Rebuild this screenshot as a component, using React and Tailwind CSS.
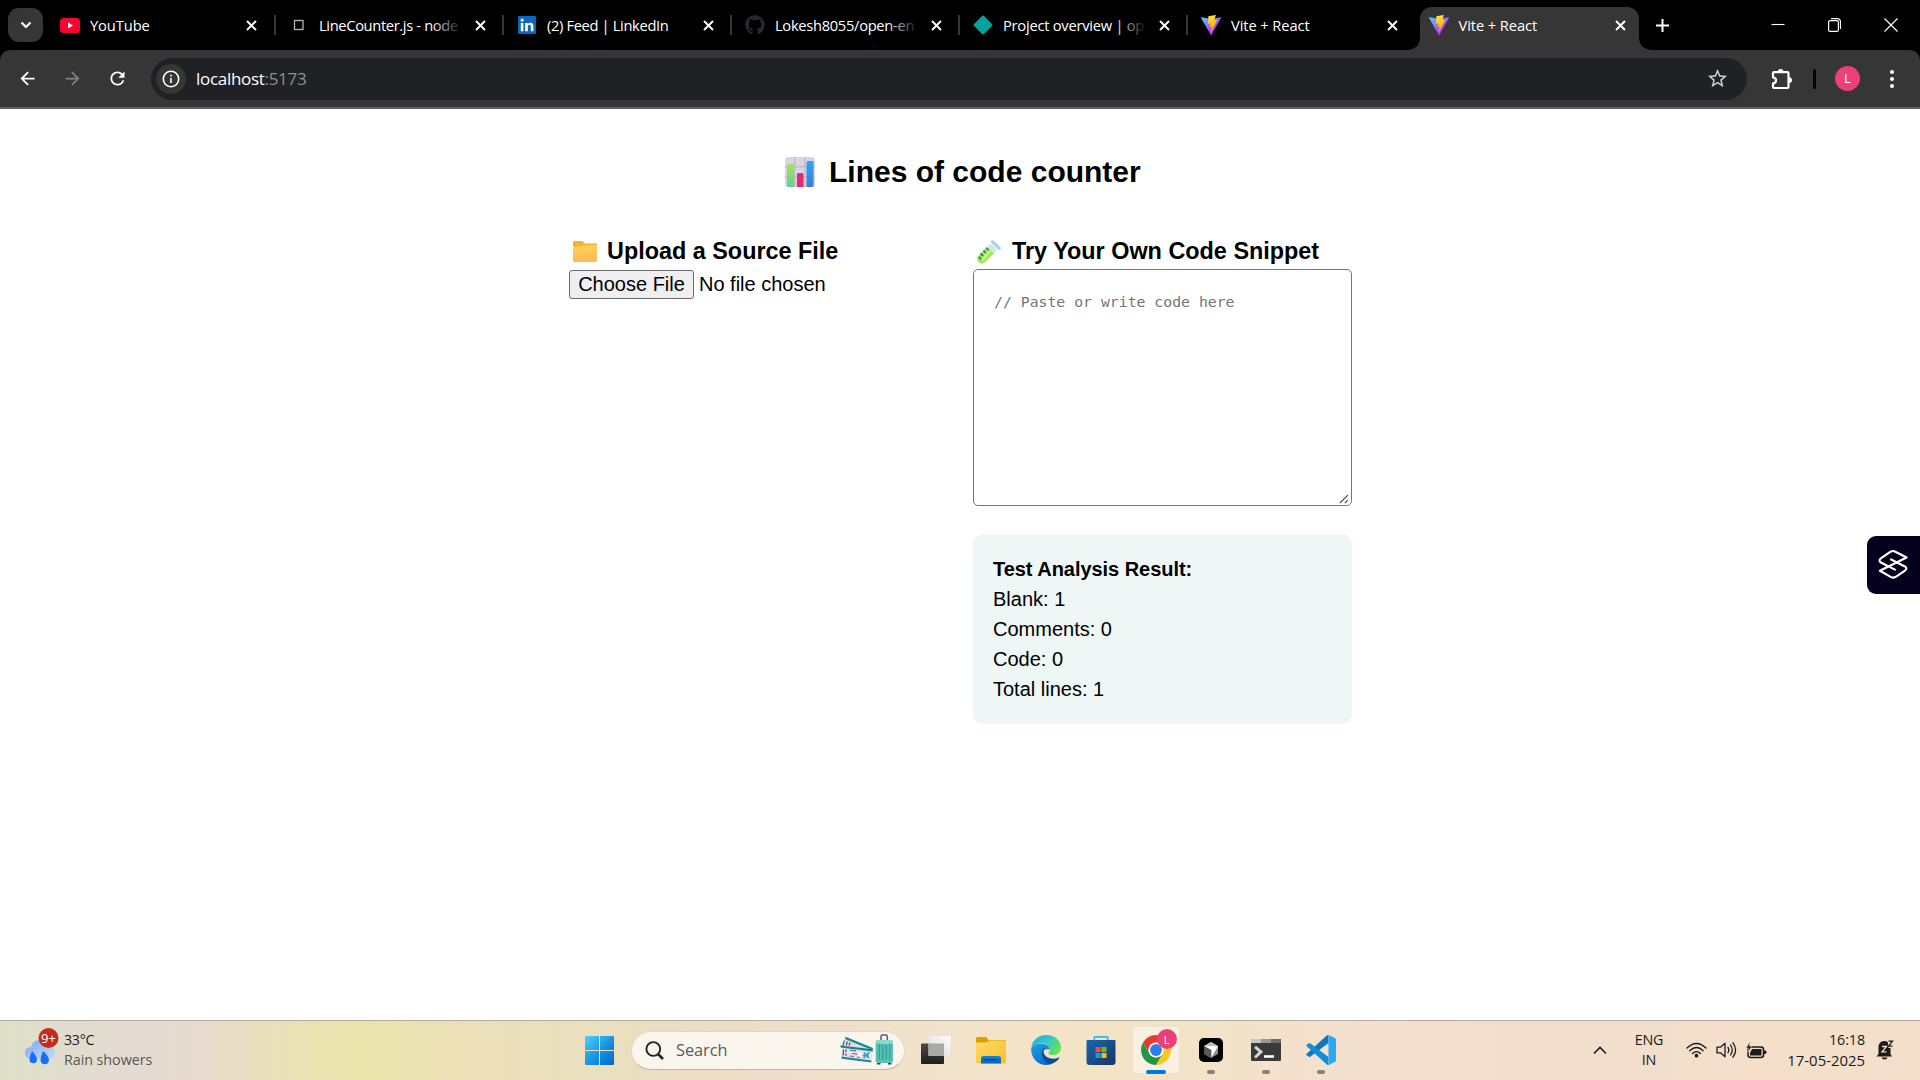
import React from "react";
import { MdArrowBack, MdArrowForward, MdRefresh, MdStarBorder } from "react-icons/md";
import { FaGithub } from "react-icons/fa";

const uiFont = "font-['Segoe_UI','Open_Sans',sans-serif]";

function YouTubeIcon() {
  return (
    <svg width="20" height="15" viewBox="0 0 20 15">
      <rect width="20" height="15" rx="3.5" fill="#ff0033" />
      <path d="M8 4.6v5.8l5-2.9z" fill="#fff" />
    </svg>
  );
}

function SquareIcon() {
  return (
    <svg width="12" height="12" viewBox="0 0 12 12">
      <rect x="1.5" y="1.5" width="8.5" height="9" fill="none" stroke="#b4b4b4" strokeWidth="1.3" />
    </svg>
  );
}

function LinkedInIcon() {
  return (
    <svg width="18" height="18" viewBox="0 0 18 18">
      <rect width="18" height="18" rx="1.3" fill="#0a66c2" />
      <circle cx="4.1" cy="4.1" r="1.6" fill="#fff" />
      <path d="M2.8 7h2.6v8.2H2.8zM7.2 7h2.5v1.1c.5-.8 1.4-1.4 2.6-1.4 2.5 0 3.1 1.6 3.1 3.8v4.7h-2.6v-4.2c0-1.1-.1-2.2-1.4-2.2s-1.6 1-1.6 2.1v4.3H7.2z" fill="#fff" />
    </svg>
  );
}

function DiamondIcon() {
  return (
    <svg width="20" height="20" viewBox="0 0 20 20">
      <path d="M9.2.8a1.200 1.200 0 0 1 1.600 0l8.300 8.400a1.200 1.200 0 0 1 0 1.600l-8.300 8.400a1.200 1.200 0 0 1-1.600 0L.9 10.800a1.200 1.200 0 0 1 0-1.600z" fill="#05a3a0" />
    </svg>
  );
}

function ViteIcon() {
  return (
    <svg width="20" height="20" viewBox="0 0 256 257">
      <defs>
        <linearGradient id="viteBody" x1="0%" x2="58%" y1="8%" y2="79%">
          <stop offset="0%" stopColor="#41D1FF" />
          <stop offset="100%" stopColor="#BD34FE" />
        </linearGradient>
        <linearGradient id="viteBolt" x1="43%" x2="50%" y1="2%" y2="89%">
          <stop offset="0%" stopColor="#FFEA83" />
          <stop offset="8%" stopColor="#FFDD35" />
          <stop offset="100%" stopColor="#FFA800" />
        </linearGradient>
      </defs>
      <path fill="url(#viteBody)" d="M255.153 37.938L134.897 252.976c-2.483 4.440-8.862 4.466-11.382.048L.875 37.958c-2.746-4.814 1.371-10.646 6.827-9.670l120.385 21.517a6.537 6.537 0 0 0 2.322-.004l117.867-21.483c5.438-.991 9.574 4.796 6.877 9.620Z" />
      <path fill="url(#viteBolt)" d="M185.432.063L96.440 17.501a3.268 3.268 0 0 0-2.634 3.014l-5.474 92.456a3.268 3.268 0 0 0 3.997 3.378l24.777-5.718c2.318-.535 4.413 1.507 3.936 3.838l-7.361 36.047c-.495 2.426 1.782 4.500 4.151 3.780l15.304-4.649c2.372-.720 4.652 1.360 4.150 3.788l-11.698 56.621c-.732 3.542 3.979 5.473 5.943 2.437l1.313-2.028l72.516-144.720c1.215-2.423-.880-5.186-3.540-4.672l-25.505 4.922c-2.396.462-4.435-1.770-3.759-4.114l16.646-57.705c.677-2.350-1.370-4.583-3.769-4.113Z" />
    </svg>
  );
}

const tabs = [
  { title: "YouTube", icon: <YouTubeIcon />, sep: true, width: "w-[229px]" },
  { title: "LineCounter.js - node", icon: <SquareIcon />, sep: true, fade: true, tracking: "tracking-[-0.35px]" },
  { title: "(2) Feed | LinkedIn", icon: <LinkedInIcon />, sep: true, tracking: "tracking-[-0.35px]" },
  { title: "Lokesh8055/open-en", icon: <FaGithub size={20} color="#24292f" />, sep: true, fade: true, tracking: "tracking-[-0.3px]" },
  { title: "Project overview | op", icon: <DiamondIcon />, sep: true, fade: true, tracking: "tracking-[-0.25px]" },
  { title: "Vite + React", icon: <ViteIcon />, width: "w-[227.5px]" },
  { title: "Vite + React", icon: <ViteIcon />, active: true, width: "w-[227.5px]" },
];

function Tab({ tab }) {
  return (
    <div className={"relative flex h-[50px] shrink-0 items-center " + (tab.width || "w-[228px]")}>
      {tab.active && (
        <svg className="absolute -left-[10px] top-[7px]" width="250" height="43" viewBox="0 0 250 43">
          <path d="M0 43c8 0 13-5 13-13V12C13 5 18 0 25 0h195c7 0 12 5 12 12v18c0 8 5 13 14 13z" fill="#363636" />
        </svg>
      )}
      <div className="relative ml-3 flex w-5 items-center justify-center">{tab.icon}</div>
      <div className={"relative ml-[10px] w-[144px] whitespace-nowrap text-[14.7px] leading-5 text-white " + (tab.tracking || "tracking-[-0.1px]")}>
        {tab.title}
        {tab.fade && <span className="absolute right-0 top-0 h-5 w-8 bg-linear-to-r from-transparent to-black" />}
      </div>
      <svg className="relative ml-[12px]" width="11" height="11" viewBox="0 0 11 11">
        <path d="M1 1l9 9M10 1l-9 9" stroke="#fff" strokeWidth="1.9" />
      </svg>
      {tab.sep && <div className="ml-auto mr-px h-5 w-[2px] bg-[#363636]" />}
    </div>
  );
}

function TabStrip() {
  return (
    <div className="flex h-[50px] bg-black">
      <div className="flex w-[48px] items-center pl-2">
        <div className="flex h-[34px] w-[35px] items-center justify-center rounded-[11px] bg-[#363636]">
          <svg width="12" height="8" viewBox="0 0 12 8">
            <path d="M1.5 1.5L6 6l4.500-4.500" fill="none" stroke="#fff" strokeWidth="2.2" />
          </svg>
        </div>
      </div>
      {tabs.map((t, i) => (
        <Tab key={i} tab={t} />
      ))}
      <div className="ml-[12px] flex items-center">
        <svg width="13" height="13" viewBox="0 0 13 13">
          <path d="M6.5 0v13M0 6.500h13" stroke="#fff" strokeWidth="2" />
        </svg>
      </div>
      <div className="ml-auto flex items-center gap-[43px] pr-[22px]">
        <svg width="14" height="14" viewBox="0 0 14 14">
          <path d="M.5 6.500h13" stroke="#fff" strokeWidth="1.1" />
        </svg>
        <svg width="13" height="14" viewBox="0 0 13 14" fill="none" stroke="#fff" strokeWidth="1.2">
          <rect x=".6" y="2.6" width="9.8" height="10.8" rx="1.5" />
          <path d="M3 .7h6.500a3 3 0 0 1 3 3V11" />
        </svg>
        <svg width="14" height="14" viewBox="0 0 14 14">
          <path d="M.5.5l13 13M13.500.5l-13 13" stroke="#fff" strokeWidth="1.2" />
        </svg>
      </div>
    </div>
  );
}

function Toolbar() {
  return (
    <div className="bg-black">
      <div className="flex h-[59px] items-center rounded-t-[10px] border-b-2 border-[#5e5c5c] bg-[#363636] text-white">
        <MdArrowBack className="ml-[17px]" size={21} />
        <MdArrowForward className="ml-[24px]" size={21} color="#818181" />
        <MdRefresh className="ml-[24px]" size={21} />
        <div className="ml-[23px] flex h-[42px] w-[1596px] items-center rounded-full bg-[#202124]">
          <div className="ml-[5px] flex h-[30px] w-[30px] items-center justify-center rounded-full bg-[#363636]">
            <svg width="18" height="18" viewBox="0 0 18 18">
              <circle cx="9" cy="9" r="7.7" fill="none" stroke="#fff" strokeWidth="1.6" />
              <path d="M9 8v5M9 4.800v1.700" stroke="#fff" strokeWidth="1.6" />
            </svg>
          </div>
          <div className="ml-[10px] mt-px text-[17px] leading-6 tracking-[-0.3px]">
            localhost<span className="text-[#8e8f91]">:5173</span>
          </div>
          <MdStarBorder className="ml-auto mr-[18px]" size={23} color="#cfcfcf" />
        </div>
        <svg className="ml-[24px]" width="22" height="22" viewBox="0 0 22 22">
          <path d="M3 4.200h13.500q1 0 1 1V19q0 1-1 1H3q-1 0-1-1v-3.600q3-.4 3-3t-3-3V5.200q0-1 1-1z" fill="none" stroke="#fff" strokeWidth="2.2" strokeLinejoin="round" />
          <path d="M7 4a2.600 2.600 0 0 1 5.200 0zM18 9.500a2.600 2.600 0 0 1 0 5.200z" fill="#fff" stroke="#fff" />
        </svg>
        <div className="ml-[20px] h-5 w-[3px] rounded bg-black" />
        <div className="ml-[19px] flex h-[25px] w-[25px] items-center justify-center rounded-full bg-[#ec407a] text-[13px]">L</div>
        <div className="ml-[30px] flex flex-col gap-[3px]">
          <span className="h-1 w-1 rounded-full bg-white" />
          <span className="h-1 w-1 rounded-full bg-white" />
          <span className="h-1 w-1 rounded-full bg-white" />
        </div>
      </div>
    </div>
  );
}

function ChartEmoji() {
  return (
    <svg width="30" height="30" viewBox="0 0 30 30">
      <defs>
        <linearGradient id="barG" x1="0" x2="0" y1="0" y2="1"><stop stopColor="#a6e05a" /><stop offset="1" stopColor="#5cd68c" /></linearGradient>
        <linearGradient id="barB" x1="0" x2="0" y1="0" y2="1"><stop stopColor="#30a4f4" /><stop offset="1" stopColor="#3f7cd0" /></linearGradient>
        <clipPath id="chartClip"><rect width="30" height="30" rx="3.5" /></clipPath>
      </defs>
      <g clipPath="url(#chartClip)">
        <rect width="30" height="30" fill="#dad5e0" />
        <path d="M0 9.800h30M0 19.800h30M9.800 0v30M19.800 0v30" stroke="#b9b2c2" strokeWidth="1" />
        <path d="M2 30V8.500q0-1.500 1.500-1.500h4Q9 7 9 8.500V30z" fill="url(#barG)" />
        <path d="M12 30V17.500q0-1.500 1.500-1.500h3.500q1.500 0 1.500 1.500V30z" fill="#e22a72" />
        <path d="M21.500 30V5.500Q21.500 4 23 4h4q1.500 0 1.500 1.500V30z" fill="url(#barB)" />
      </g>
    </svg>
  );
}

function FolderEmoji() {
  return (
    <svg width="24" height="21" viewBox="0 0 24 21">
      <defs>
        <linearGradient id="folderF" x1="0" x2="0" y1="0" y2="1"><stop stopColor="#ffd352" /><stop offset="1" stopColor="#ffb75c" /></linearGradient>
      </defs>
      <path d="M0 1.500Q0 0 1.500 0h7q1 0 1.700.8L12 2.600h10.500Q24 2.600 24 4v3H0z" fill="#f9ae38" />
      <path d="M0 5.500h8.500L11 4.300h11.500q1.500 0 1.500 1.400v13.800q0 1.500-1.500 1.500h-21Q0 21 0 19.500z" fill="url(#folderF)" />
    </svg>
  );
}

function TubeEmoji() {
  return (
    <svg width="24" height="24" viewBox="0 0 24 24">
      <path d="M14 3.500l6.500 6.500-5 5-7.500-7z" fill="#cfe8f8" />
      <path d="M9 7.500l8 6L7 23q-3 1.500-5.500-1T.8 16.500z" fill="#a6e45a" />
      <path d="M15.500 7L5 20" stroke="#c8f388" strokeWidth="3" />
      <path d="M14.200.6q1.500-1 2.800.2l6.300 6.400q1 1.200 0 2.400-1 .8-2.400-.4l-6.600-6.400q-1-1.100-.1-2.200z" fill="#a3d2f5" />
      <path d="M4.200 14l1.500 1.500M7 11.200l1.500 1.500M9.800 8.400l1.500 1.500M2.500 17.500l1.200 1.200" stroke="#2c8c4c" strokeWidth="1.8" strokeLinecap="round" />
    </svg>
  );
}

function Page() {
  return (
    <main className="relative flex h-[911px] flex-col bg-white font-['Liberation_Sans',Arial,sans-serif] text-black">
      <h1 className="mt-[45px] flex h-[36px] items-center pl-[785px] text-[30px] font-bold leading-9">
        <ChartEmoji />
        <span className="ml-[14px] whitespace-nowrap">Lines of code counter</span>
      </h1>
      <div className="ml-[569px] mt-[48px] flex">
        <section className="w-[404px]">
          <h3 className="flex h-[27px] items-center pl-1 text-[23.4px] font-bold leading-[27px]">
            <FolderEmoji />
            <span className="ml-[10px]">Upload a Source File</span>
          </h3>
          <div className="mt-[4px] flex h-[30px] items-center text-[20px] leading-6">
            <div className="flex h-[29px] w-[125px] items-center justify-center rounded-[3px] border border-[#6b6b6b] bg-[#efefef] whitespace-nowrap">Choose File</div>
            <span className="ml-[5px]">No file chosen</span>
          </div>
        </section>
        <section className="w-[379px]">
          <h3 className="flex h-[27px] items-center pl-[4px] text-[23.4px] font-bold leading-[27px]">
            <TubeEmoji />
            <span className="ml-[11px] whitespace-nowrap">Try Your Own Code Snippet</span>
          </h3>
          <div className="mt-[4px] flex h-[237px] rounded-[5px] border border-[#767676] bg-white">
            <div className="whitespace-pre pl-[20px] pt-[22px] font-['DejaVu_Sans_Mono',monospace] text-[14.8px] leading-5 text-[#757575]">// Paste or write code here</div>
            <svg className="mb-[1px] ml-auto mr-[2px] self-end" width="10" height="10" viewBox="0 0 10 10">
              <path d="M.8 9.200l8-8M5.800 9.200l3-3" stroke="#444" strokeWidth="1.2" />
            </svg>
          </div>
          <div className="mt-[28px] rounded-[10px] bg-[#eef6f6] p-5 text-[20px] leading-[30px]">
            <div className="font-bold tracking-[-0.04px]">Test Analysis Result:</div>
            <div>Blank: 1</div>
            <div>Comments: 0</div>
            <div>Code: 0</div>
            <div>Total lines: 1</div>
          </div>
        </section>
      </div>
      <div className="absolute right-0 top-[427px] flex h-[58px] w-[53px] items-center rounded-l-[9px] bg-[#05001e] pb-px pl-[11px]">
        <svg width="30" height="31" viewBox="0 0 31 31" fill="none" stroke="#fff" strokeWidth="2.2" strokeLinejoin="round" strokeLinecap="round">
          <path d="M17.500 20.800L3 13.500q-3-2 .3-4.500L13 2.300q2.500-1.500 5 0L29.500 8.200 2 22l11.500 6.500q2 1.200 4.500 0l9.500-6.300q3.500-2.700.3-4.700L13.500 10.300" />
        </svg>
      </div>
    </main>
  );
}

function WeatherIcon() {
  return (
    <svg width="38" height="40" viewBox="0 0 38 40">
      <defs>
        <linearGradient id="cloud" x1="0" x2="1" y1="0" y2="1"><stop stopColor="#7ba5f2" /><stop offset="1" stopColor="#c8dcfa" /></linearGradient>
      </defs>
      <path d="M7 31q-6 0-6-6t6-6q2-7 9-7t8 7q7-1 7 6t-6 6z" fill="url(#cloud)" />
      <path d="M8 23q5 5 5 9a3.800 3.800 0 0 1-7.500 0q0-4 2.500-9zM19 23q6 5 6 9.500a4.300 4.300 0 0 1-8.500 0q0-4.500 2.500-9.500z" fill="#1273f5" />
      <circle cx="24.5" cy="10" r="10" fill="#c42b1c" />
      <text x="24.5" y="14.8" fontSize="13" fill="#fff" textAnchor="middle" fontFamily="Open Sans, sans-serif">9+</text>
    </svg>
  );
}

function StartIcon() {
  return (
    <svg width="29" height="29" viewBox="0 0 29 29">
      <defs>
        <linearGradient id="win" x1="0" x2="1" y1="0" y2="1"><stop stopColor="#4fd3fb" /><stop offset=".5" stopColor="#1c96e2" /><stop offset="1" stopColor="#0069c8" /></linearGradient>
      </defs>
      <path d="M1 0h13v14H0V1q0-1 1-1zM15 0h13q1 0 1 1v13H15zM0 15h14v14H1q-1 0-1-1zM15 15h14v13q0 1-1 1H15z" fill="url(#win)" />
    </svg>
  );
}

function TravelArt() {
  return (
    <svg width="54" height="32" viewBox="0 0 54 32">
      <path d="M6 3.300L32.500 14l-1.500 5L1.500 14z" fill="#e2dbe2" />
      <path d="M5.500 2.800L33 14l-.8 2L5 5z" fill="#128b90" />
      <path d="M4.500 6.500l-2 6M7.500 7.500l-1.300 4M10 8.500l-1 3" stroke="#42506e" strokeWidth="1.1" />
      <path d="M1.800 13L32.800 16l-1.300 11.500L1.500 23z" fill="#e9e2ea" />
      <path d="M0 11.800q1-.6 2.500 0l30.500 3.500-.3 2.200L2 13.800q-2-.6-2-2z" fill="#14868f" />
      <path d="M1.500 22.500l30 4-.3 2.100L1.500 24.800z" fill="#1c88a6" />
      <path d="M3.500 15.500l-.3 6M6 15.500v2.500M6 19.500v2.300" stroke="#48476a" strokeWidth="1.2" />
      <path d="M10 16.200l6 .6M10 22l4 .5M12 19.500l7 .8M17 23l3 .3" stroke="#6e6c88" strokeWidth="1.2" />
      <path d="M17 18.500l5 .5v4l-4-.4z" fill="#f8f4fa" />
      <path d="M23.500 24.200l5.800-6M24 18.500l4.800 5.700M22.800 21.300l6 .3" stroke="#3d9fc0" strokeWidth="1.7" />
      <path d="M41 7V2.500Q41 1 42.500 1h3.300Q47.300 1 47.300 2.500V7" fill="none" stroke="#5b5a7a" strokeWidth="1.5" />
      <rect x="35.700" y="6" width="17.300" height="23" rx="2.5" fill="#56c0b5" />
      <path d="M35.700 8.500q0-2.500 2.500-2.500h12.300Q53 6 53 8.500V10H35.700z" fill="#8adacb" />
      <path d="M39.300 9.500v16M42.800 11v14.500M46.300 11v14.500M49.800 9.500v16" stroke="#309e99" strokeWidth="1.1" />
      <path d="M37 29h3.500v1.500H37zM48 29h3.500v1.500H48z" fill="#3d3f60" />
    </svg>
  );
}

function TaskViewIcon() {
  return (
    <svg width="30" height="28" viewBox="0 0 30 28">
      <defs>
        <linearGradient id="tv1" x1="0" x2="0" y1="0" y2="1"><stop stopColor="#4a4a4a" /><stop offset="1" stopColor="#1e1e1e" /></linearGradient>
        <linearGradient id="tv2" x1="0" x2="1" y1="1" y2="0"><stop stopColor="#d6d6d6" /><stop offset="1" stopColor="#fff" /></linearGradient>
      </defs>
      <rect x="0" y="7.500" width="23" height="20.500" rx="1" fill="url(#tv1)" />
      <rect x="7.500" y="0" width="22" height="20" rx="1" fill="url(#tv2)" />
      <rect x="7.500" y="7.500" width="15.500" height="12.500" fill="#a9a9a7" />
    </svg>
  );
}

function ExplorerIcon() {
  return (
    <svg width="30" height="27" viewBox="0 0 30 27">
      <defs>
        <linearGradient id="ex" x1="0" x2="1" y1="0" y2="1"><stop stopColor="#ffdc6b" /><stop offset="1" stopColor="#fcbd2a" /></linearGradient>
        <linearGradient id="exb" x1="0" x2="0" y1="0" y2="1"><stop stopColor="#1583d4" /><stop offset="1" stopColor="#0864b4" /></linearGradient>
      </defs>
      <path d="M0 1.500Q0 0 1.500 0h8.500l2.500 3H29q1 0 1 1v5H0z" fill="#dda003" />
      <path d="M0 5.500h10.500L13 3.600h16q1 0 1 1V25q0 1.500-1.500 1.500h-27Q0 26.500 0 25z" fill="url(#ex)" />
      <path d="M5 26.500v-5q0-2.500 2.500-2.500h15q2.500 0 2.500 2.500v5z" fill="url(#exb)" />
      <path d="M8 22.800h14" stroke="#083f77" strokeWidth="1.2" />
    </svg>
  );
}

function EdgeIcon() {
  return (
    <svg width="30" height="30" viewBox="0 0 30 30">
      <defs>
        <linearGradient id="eg1" x1="0" x2="1" y1="0" y2=".6"><stop stopColor="#2aa9dc" /><stop offset=".5" stopColor="#34c4c8" /><stop offset="1" stopColor="#63e454" /></linearGradient>
        <linearGradient id="eg2" x1="0" x2=".6" y1="0" y2="1"><stop stopColor="#1ea3e4" /><stop offset="1" stopColor="#0a6ecb" /></linearGradient>
      </defs>
      <path d="M.1 13.500Q2 8.500 10 8.500q7 .5 9 5l-1 1q-6-1-6.500 4 0 7 8 10.800-2 .7-4.500.7C6.500 30 0 23 .1 13.500z" fill="url(#eg2)" />
      <path d="M.2 12.500C1.500 5 7.500 0 15 0c9 0 15 6 15 12.500 0 5-4 7.700-8.300 7.700-3 0-4.700-1-4.200-2.500 1.500-1.500 1.500-3 1-4.200C17.500 10 14.500 8.300 10.500 8.300 5 8.300 1.500 10.500.2 12.500z" fill="url(#eg1)" />
      <path d="M14.500 12.700C9 14.500 9.500 25 18.500 29.600c4.500-.8 8-3.500 9.800-6.500.3-.6-.1-.9-.7-.6-1.500.8-3.200 1.200-5 1.200-5.500 0-10-3-10-7 0-1.800.8-3.200 1.900-4z" fill="#0c4c96" />
    </svg>
  );
}

function StoreIcon() {
  return (
    <svg width="30" height="29" viewBox="0 0 30 29">
      <defs>
        <linearGradient id="st" x1="0" x2="1" y1="0" y2="1"><stop stopColor="#1567b2" /><stop offset="1" stopColor="#20345f" /></linearGradient>
      </defs>
      <path d="M8.300 6V1.700Q8.300.8 9.200.8h11.600q.9 0 .9.9V6" fill="none" stroke="#2fb8ee" strokeWidth="1.7" />
      <path d="M.5 5Q.5 4 1.500 4h27q1 0 1 1v21q0 3-3 3h-23q-3 0-3-3z" fill="url(#st)" />
      <path d="M9.500 11h5v5h-5z" fill="#f25022" />
      <path d="M15.500 11h5v5h-5z" fill="#7fba00" />
      <path d="M9.500 17h5v5h-5z" fill="#00a4ef" />
      <path d="M15.500 17h5v5h-5z" fill="#ffb900" />
    </svg>
  );
}

function ChromeIcon() {
  return (
    <svg width="30" height="30" viewBox="0 0 30 30">
      <path d="M2.010 7.500A15 15 0 0 1 27.990 7.500H15A7.500 7.500 0 0 0 8.500 18.750Z" fill="#e33b2e" />
      <path d="M27.990 7.500A15 15 0 0 1 15 30L21.500 18.750A7.500 7.500 0 0 0 15 7.500Z" fill="#fdc620" />
      <path d="M15 30A15 15 0 0 1 2.010 7.500L8.500 18.750A7.500 7.500 0 0 0 21.500 18.750Z" fill="#249447" />
      <circle cx="15" cy="15" r="7.3" fill="#fff" />
      <circle cx="15" cy="15" r="5.9" fill="#2f7de9" />
    </svg>
  );
}

function CubeIcon() {
  return (
    <svg width="24" height="24" viewBox="0 0 24 24">
      <rect width="24" height="24" rx="5" fill="#000" />
      <path d="M12 4l7 4v8l-7 4-7-4V8z" fill="#8c8c8c" />
      <path d="M5 8l7-4 7 4-7 3z" fill="#bdbdbd" />
      <path d="M5 8l14 .2-6.500 11.300V12z" fill="#fff" />
      <path d="M5 8v8l7 4v-8z" fill="#5a5a5a" />
    </svg>
  );
}

function TerminalIcon() {
  return (
    <svg width="30" height="22" viewBox="0 0 30 22">
      <rect width="30" height="22" rx="1" fill="#3a3a3a" />
      <path d="M0 1q0-1 1-1h9v4H0z" fill="#c8c8c8" />
      <path d="M10 0h10v4H10z" fill="#989898" />
      <path d="M20 0h9q1 0 1 1v3H20z" fill="#6d6d6d" />
      <path d="M4 7.800l6 5-6 5.700" fill="none" stroke="#d9d9d9" strokeWidth="2.8" />
      <path d="M13 17.500h10" stroke="#fff" strokeWidth="2.6" />
    </svg>
  );
}

function CodeIcon() {
  return (
    <svg width="30" height="30" viewBox="0 0 30 30">
      <path d="M1 18.500L20.500.7q.8-.9 1.800-.6L22.500 8 4.200 21.800q-.7.5-1.300 0L.5 20q-.8-.7.5-1.500z" fill="#0c76c0" />
      <path d="M1 11.500L20.500 29.300q.8.9 1.800.6l.2-7.900L4.200 8.200q-.7-.5-1.300 0L.5 10q-.8.7.5 1.500z" fill="#128ed6" />
      <path d="M20.500 29.400q1.500 1 3.200.2l5.200-2.500q1.100-.6 1.100-1.800V4.700q0-1.200-1.100-1.800L23.700.4q-1.700-.8-3.200.2 2-.6 2 1.400v26q0 2-2 1.400z" fill="#29a9f2" />
    </svg>
  );
}

function AppCell({ children, state }) {
  return (
    <div className="flex h-[59px] w-[55px] items-center justify-center">
      <div className={"relative flex h-12 w-12 items-center justify-center rounded-[5px] " + (state === "active" ? "border border-[#efe3d0] bg-[#f9f0e2]" : "")}>
        {children}
        {state === "active" && (
          <>
            <span className="absolute right-[2px] top-[2px] flex h-5 w-5 items-center justify-center rounded-full bg-[#ea4078] text-[11px] leading-none text-white">L</span>
            <span className="absolute bottom-[-1px] h-1 w-5 rounded-full bg-[#0078d7]" />
          </>
        )}
        {state === "running" && <span className="absolute bottom-0 h-1 w-2 rounded-full bg-[#8b8175]" />}
      </div>
    </div>
  );
}

function TrayIcons() {
  return (
    <div className="flex items-center gap-[9px]">
      <svg width="21" height="16" viewBox="0 0 21 16" fill="none" stroke="#1b1b1b" strokeWidth="1.3" strokeLinecap="round">
        <path d="M1 6Q10.500-3 20 6M3.800 8.800q6.700-6.500 13.400 0M6.500 11.500q4-3.700 8 0" />
        <circle cx="10.5" cy="13.7" r="1.2" fill="#1b1b1b" />
      </svg>
      <svg width="21" height="18" viewBox="0 0 21 18" fill="none" stroke="#1b1b1b" strokeWidth="1.3" strokeLinejoin="round" strokeLinecap="round">
        <path d="M1 6.200h3.500L9 2.200v13.600l-4.500-4H1z" />
        <path d="M12 6.300q1.600 2.700 0 5.400M14.500 4q3.500 5 0 10M17 1.800q5.200 7.200 0 14.400" />
      </svg>
      <svg width="21" height="17" viewBox="0 0 21 17">
        <rect x="2" y="5" width="15.5" height="10.5" rx="2.5" fill="none" stroke="#1b1b1b" strokeWidth="1.5" />
        <path d="M6 7h9.500v6.500H4V11z" fill="#1b1b1b" />
        <path d="M18 8.300q2.500 0 2.500 2t-2.500 2z" fill="#1b1b1b" />
        <path d="M4 0L0 6h2.500L1.500 10.500 6 4.200H3.500z" fill="#1b1b1b" stroke="#f3dfcb" strokeWidth=".5" />
      </svg>
    </div>
  );
}

function Taskbar() {
  return (
    <footer className="flex h-[60px] items-center border-t border-[#b5aa9e] bg-[linear-gradient(90deg,#dde0c8_0px,#e4dad2_120px,#e6dad0_190px,#e8e0ba_270px,#e8e4ab_350px,#e9e3ad_400px,#ecdfb8_460px,#eadfbd_560px,#e9dfc0_640px,#eeddc8_760px,#f2e3cc_960px,#f2e4c4_1110px,#f3e2cb_1250px,#f4dfd0_1370px,#f1decd_1600px,#f5dfcb_1760px,#f4dfcc_1920px)] pb-px text-[#1b1b1b]">
      <div className="flex w-[572px] items-center pl-[24px]">
        <div className="mt-[-4px]"><WeatherIcon /></div>
        <div className="ml-[2px] flex flex-col text-[14.3px] leading-5">
          <span className="tracking-[-0.3px]">33°C</span>
          <span className="tracking-[-0.05px] text-[#595655]">Rain showers</span>
        </div>
      </div>
      <div className="flex items-center">
        <AppCell><StartIcon /></AppCell>
        <div className="ml-[4px] mr-[3px] flex h-[39px] w-[274px] items-center rounded-full border border-[#e3d7c4] border-b-[#c1b5a4] bg-[#faf5ed] pl-[13px]">
          <svg width="19" height="19" viewBox="0 0 19 19" fill="none" stroke="#222">
            <circle cx="8.3" cy="8" r="6.9" strokeWidth="1.9" />
            <path d="M13 13l5 5" strokeWidth="2.5" />
          </svg>
          <span className="ml-[12px] text-[16.3px] leading-6 text-[#5c5b59]">Search</span>
          <div className="ml-auto mr-[10px]"><TravelArt /></div>
        </div>
        <AppCell><TaskViewIcon /></AppCell>
        <AppCell><ExplorerIcon /></AppCell>
        <AppCell><EdgeIcon /></AppCell>
        <AppCell><StoreIcon /></AppCell>
        <AppCell state="active"><ChromeIcon /></AppCell>
        <AppCell state="running"><CubeIcon /></AppCell>
        <AppCell state="running"><TerminalIcon /></AppCell>
        <AppCell state="running"><CodeIcon /></AppCell>
      </div>
      <div className="ml-auto flex items-center pr-[26px] text-[14.3px] leading-5">
        <svg width="14" height="9" viewBox="0 0 14 9">
          <path d="M1 7.500l6-6 6 6" fill="none" stroke="#1b1b1b" strokeWidth="1.6" />
        </svg>
        <div className="ml-[25px] flex w-[34px] flex-col items-center tracking-[-0.2px]">
          <span>ENG</span>
          <span>IN</span>
        </div>
        <div className="ml-[20px]"><TrayIcons /></div>
        <div className="ml-[16px] flex w-[82px] flex-col items-end">
          <span className="tracking-[-0.1px]">16:18</span>
          <span className="whitespace-nowrap text-[14.9px]">17-05-2025</span>
        </div>
        <svg className="ml-[11px]" width="18" height="20" viewBox="0 0 18 20">
          <path d="M2.500 14V7.500Q2.500 1 8.500 1q6 0 6 6.500V14l1.500 2.500H.5z" fill="#1b1b1b" />
          <path d="M5.500 17.500h6q-.5 2-3 2t-3-2z" fill="#1b1b1b" />
          <path d="M6 6.500h4.500L6 11.800h4.500" fill="none" stroke="#f3dfcb" strokeWidth="1.3" />
          <path d="M11.500 0H18v8h-5.500z" fill="#f3dfcb" />
          <path d="M12.500 1.200h4l-4 5h4" fill="none" stroke="#1b1b1b" strokeWidth="1.3" />
        </svg>
      </div>
    </footer>
  );
}

export default function App() {
  return (
    <div className={"flex h-[1080px] w-[1920px] flex-col overflow-hidden " + uiFont}>
      <TabStrip />
      <Toolbar />
      <Page />
      <Taskbar />
    </div>
  );
}
